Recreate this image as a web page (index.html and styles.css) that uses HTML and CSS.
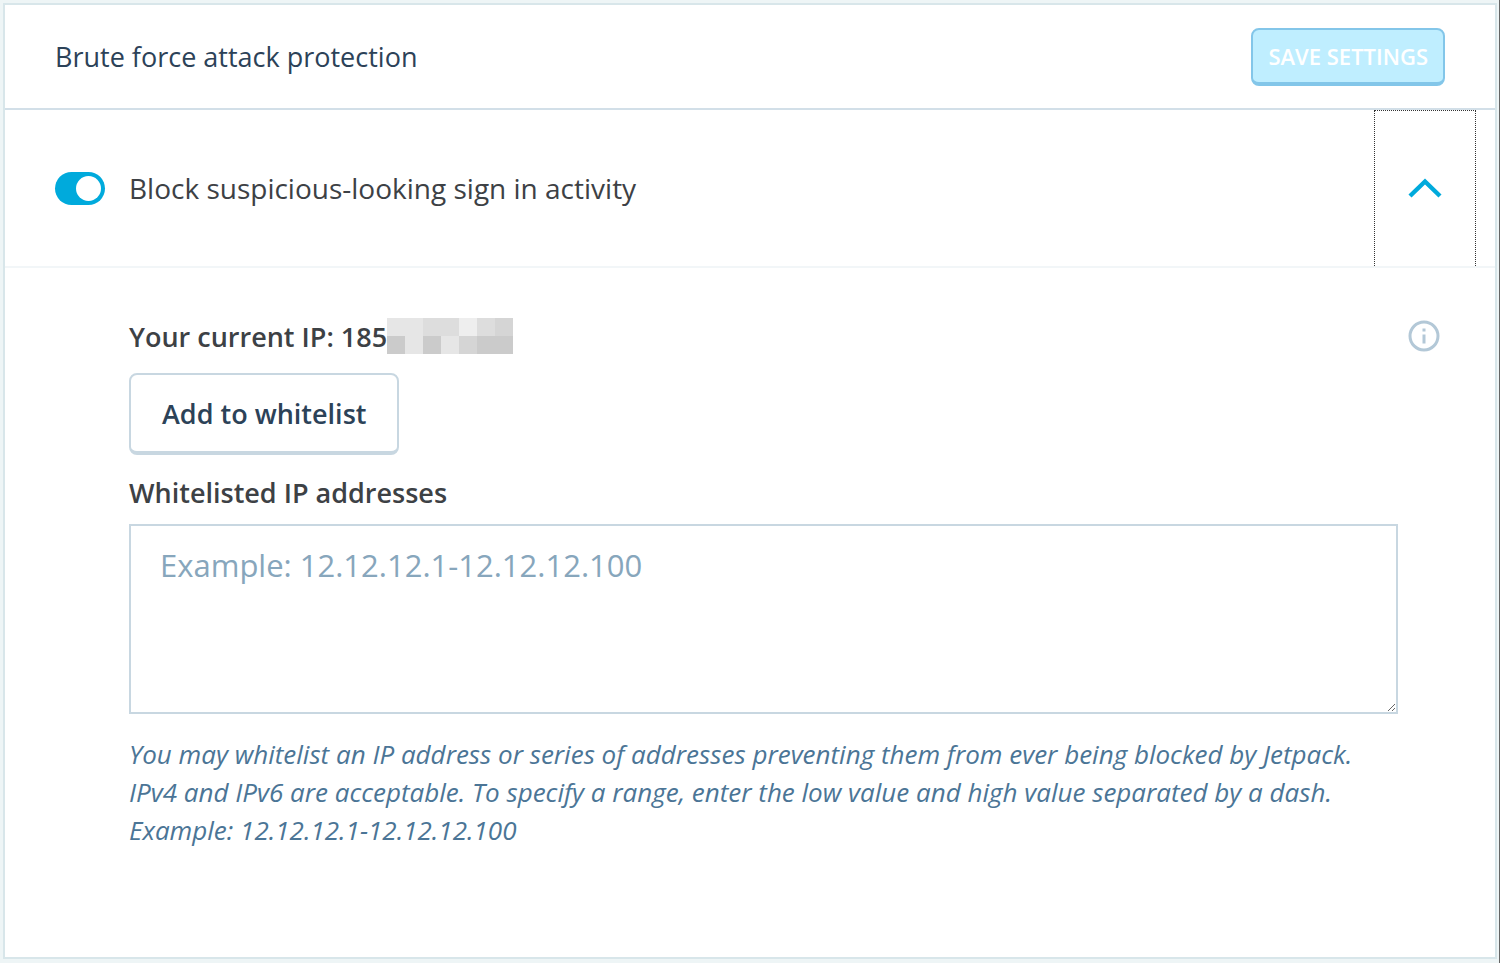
FILE: index.html
```
<!DOCTYPE html>
<html lang="en">
<head>
    <meta charset="UTF-8">
    <meta name="viewport" content="width=device-width, initial-scale=1.0">
    <title>Brute force attack protection</title>
    <link rel="stylesheet" href="styles.css">
</head>
<body>
    <form class="card">
        <header class="card-header">
            <h1 class="card-title">Brute force attack protection</h1>
            <button class="save-button" type="submit" disabled>SAVE SETTINGS</button>
        </header>

        <div class="toggle-row">
            <input class="toggle" type="checkbox" id="protect" checked>
            <label class="toggle-label" for="protect">Block suspicious-looking sign in activity</label>
            <button class="expand-button" type="button" aria-label="Collapse" aria-expanded="true">
                <svg width="34" height="22" viewBox="0 0 34 22" aria-hidden="true">
                    <path d="M2 18L17 3.5L32 18" fill="none" stroke="#00aadc" stroke-width="4.4"/>
                </svg>
            </button>
        </div>

        <div class="panel">
            <div class="settings">
                <div class="current-ip">
                    <span>Your current IP: 185</span>
                    <div class="mosaic">
                        <i class="c2"></i><i class="c2"></i><i class="c3"></i><i class="c3"></i><i class="c1"></i><i class="c3"></i><i class="c4"></i>
                        <i class="c5"></i><i class="c2"></i><i class="c5"></i><i class="c2"></i><i class="c4"></i><i class="c5"></i><i class="c5"></i>
                    </div>
                </div>
                <button class="add-button" type="button">Add to whitelist</button>
                <label class="field-label" for="whitelist">Whitelisted IP addresses</label>
                <textarea class="whitelist" id="whitelist" placeholder="Example: 12.12.12.1-12.12.12.100"></textarea>
                <p class="help">You may whitelist an IP address or series of addresses preventing them from ever being blocked by Jetpack. IPv4 and IPv6 are acceptable. To specify a range, enter the low value and high value separated by a dash. Example: 12.12.12.1-12.12.12.100</p>
            </div>
            <button class="info-button" type="button" aria-label="More information">
                <svg width="32" height="32" viewBox="0 0 32 32" aria-hidden="true">
                    <circle cx="16" cy="16" r="14" fill="none" stroke="#b3c8d7" stroke-width="3"/>
                    <path d="M14.5 8.5h3v3h-3zM14.5 14.5h3v9h-3z" fill="#b3c8d7"/>
                </svg>
            </button>
        </div>
    </form>
</body>
</html>
```
FILE: styles.css
```
* {
    box-sizing: border-box;
}
body {
    display: flex;
    min-height: 100vh;
    margin: 0;
    padding: 3px 2px 4px 3px;
    border-right: 1px solid #666;
    background-color: #eef5f6;
    color: #3d4145;
    font-family: "Segoe UI", "Open Sans", "Noto Sans", sans-serif;
    font-size: 27px;
    line-height: 38px;
}
button {
    font-family: inherit;
    cursor: pointer;
}
.card {
    flex: 1;
    border: 2px solid #d8e6ea;
    background-color: #fff;
}
.card-header {
    display: flex;
    align-items: center;
    justify-content: space-between;
    height: 105px;
    padding: 0 50px;
    border-bottom: 2px solid #d2dfe8;
}
.card-title {
    margin: 0;
    color: #2c4258;
    font-size: 27px;
    font-weight: 400;
}
.save-button {
    height: 58px;
    padding: 0 15px;
    border: 2px solid #83c6e9;
    border-bottom-width: 4px;
    border-radius: 8px;
    background-color: #bfeeff;
    color: #fff;
    font-size: 22px;
    font-weight: 600;
    cursor: default;
}
.toggle-row {
    display: flex;
    align-items: center;
    height: 158px;
    padding: 0 19px 0 50px;
    border-bottom: 2px solid #f2f6f8;
}
.toggle {
    display: flex;
    align-items: center;
    justify-content: flex-end;
    width: 50px;
    height: 33px;
    margin: 0 24px 0 0;
    padding: 4px;
    border-radius: 17px;
    background-color: #00aadc;
    appearance: none;
    cursor: pointer;
}
.toggle::before {
    width: 25px;
    height: 25px;
    border-radius: 50%;
    background-color: #fff;
    content: "";
}
.toggle:not(:checked) {
    justify-content: flex-start;
    background-color: #c8d7e1;
}
.toggle-label {
    font-size: 28px;
}
.expand-button {
    display: flex;
    align-items: center;
    justify-content: center;
    align-self: stretch;
    width: 102px;
    margin-left: auto;
    padding: 0;
    border: 1px dotted #333;
    border-bottom: 0;
    background: none;
}
.panel {
    display: flex;
    align-items: flex-start;
    gap: 10px;
    padding: 50px 55px 50px 124px;
}
.settings {
    display: flex;
    flex: 1;
    flex-direction: column;
    align-items: flex-start;
}
.current-ip {
    display: flex;
    font-weight: 600;
}
.mosaic {
    display: grid;
    grid-template-columns: repeat(7, 18px);
    grid-auto-rows: 18px;
}
.c1 { background-color: #eee; }
.c2 { background-color: #e6e6e6; }
.c3 { background-color: #ddd; }
.c4 { background-color: #d5d5d5; }
.c5 { background-color: #cbcbcb; }
.add-button {
    height: 82px;
    margin: 17px 0 19px;
    padding: 0 31px;
    border: 2px solid #c8d7e1;
    border-bottom-width: 4px;
    border-radius: 8px;
    background-color: #fff;
    color: #2c4258;
    font-size: 27px;
    font-weight: 600;
}
.field-label {
    font-weight: 600;
}
.whitelist {
    width: 100%;
    height: 190px;
    margin: 12px 0 21px;
    padding: 17px 29px;
    border: 2px solid #c8d7e1;
    border-radius: 0;
    background-color: #fff;
    color: #2c4258;
    font-family: inherit;
    font-size: 31px;
    line-height: 44px;
    resize: vertical;
}
.whitelist::placeholder {
    color: #87a6bc;
}
.help {
    margin: 0;
    color: #4b7596;
    font-size: 26px;
    font-style: italic;
}
.info-button {
    display: flex;
    padding: 2px 0;
    border: 0;
    background: none;
}
```
